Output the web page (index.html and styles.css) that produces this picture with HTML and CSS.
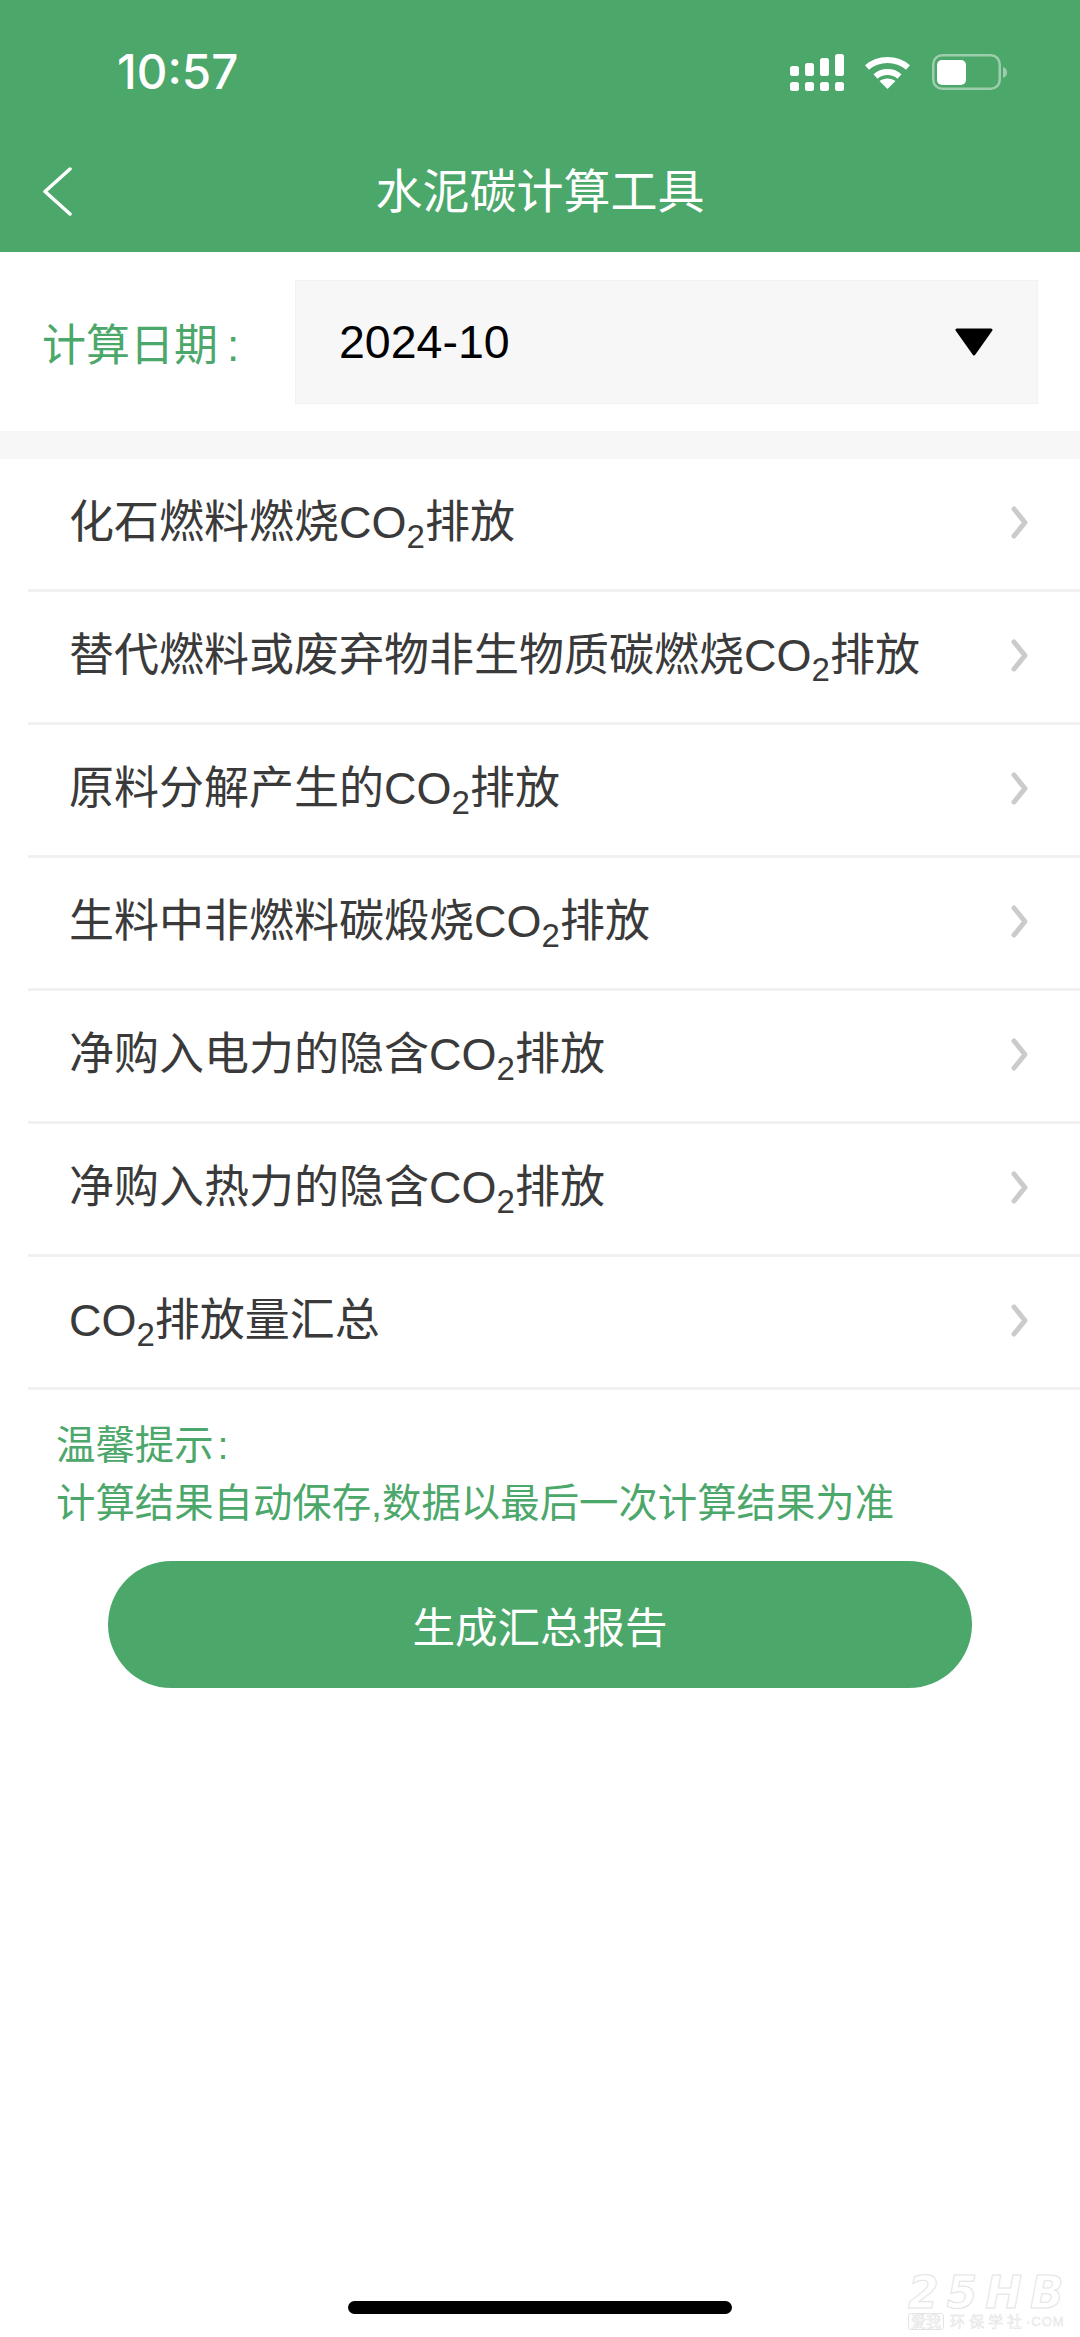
FILE: index.html
```html
<!DOCTYPE html>
<html lang="zh-CN">
<head>
<meta charset="utf-8">
<title>水泥碳计算工具</title>
<link rel="stylesheet" href="styles.css">
</head>
<body>
<div class="page">
  <header class="header">
    <div class="status">
      <span class="time">10:57</span>
      <div class="status-icons">
        <svg class="signal" width="54" height="37" viewBox="0 0 54 37">
          <rect x="0" y="12" width="9" height="10" rx="2.5"/><rect x="15" y="9" width="9" height="13" rx="2.5"/><rect x="30" y="4" width="9" height="18" rx="2.5"/><rect x="45" y="0" width="9" height="22" rx="2.5"/>
          <rect x="0" y="28" width="9" height="9" rx="2.5"/><rect x="15" y="28" width="9" height="9" rx="2.5"/><rect x="30" y="28" width="9" height="9" rx="2.5"/><rect x="45" y="28" width="9" height="9" rx="2.5"/>
        </svg>
        <svg class="wifi" width="47" height="33" viewBox="0 0 47 33">
          <path d="M3 11.5C14.5 1.5 32.5 1.5 44 11.5" fill="none" stroke="#fff" stroke-width="6"/>
          <path d="M11.5 20.5C18 14.5 29 14.5 35.5 20.5" fill="none" stroke="#fff" stroke-width="6"/>
          <path d="M15.5 25C20 21.5 27 21.5 31.5 25L23.5 33Z" fill="#fff"/>
        </svg>
        <svg class="battery" width="75" height="36" viewBox="0 0 75 36">
          <rect x="1.25" y="1.25" width="66.5" height="33.5" rx="9" fill="none" stroke="#fff" stroke-opacity=".45" stroke-width="2.5"/>
          <rect x="5" y="6" width="29" height="25" rx="5" fill="#fff"/>
          <path d="M71 13C74 14 75 16 75 18.500C75 21 74 23 71 24Z" fill="#fff" fill-opacity=".45"/>
        </svg>
      </div>
    </div>
    <div class="nav">
      <svg class="back" width="29" height="49" viewBox="0 0 29 49"><path d="M27 2L2 24.500L27 47" fill="none" stroke="#fff" stroke-width="3.500" stroke-linecap="round" stroke-linejoin="round"/></svg>
      <h1 class="title">水泥碳计算工具</h1>
    </div>
  </header>

  <section class="date-bar">
    <span class="date-label">计算日期<span class="colon">:</span></span>
    <div class="select">
      <span class="select-value">2024-10</span>
      <svg class="caret" width="40" height="28" viewBox="0 0 40 28"><path d="M3 2H37L20 26Z" fill="#000" stroke="#000" stroke-width="3" stroke-linejoin="round"/></svg>
    </div>
  </section>

  <div class="band"></div>

  <ul class="list">
    <li class="row"><span class="row-text">化石燃料燃烧CO<sub>2</sub>排放</span><svg class="arrow" width="18" height="33" viewBox="0 0 18 33"><path d="M3 3L14 16.500L3 30" fill="none" stroke="#cbcbcb" stroke-width="5" stroke-linecap="round" stroke-linejoin="round"/></svg></li>
    <li class="row"><span class="row-text">替代燃料或废弃物非生物质碳燃烧CO<sub>2</sub>排放</span><svg class="arrow" width="18" height="33" viewBox="0 0 18 33"><path d="M3 3L14 16.500L3 30" fill="none" stroke="#cbcbcb" stroke-width="5" stroke-linecap="round" stroke-linejoin="round"/></svg></li>
    <li class="row"><span class="row-text">原料分解产生的CO<sub>2</sub>排放</span><svg class="arrow" width="18" height="33" viewBox="0 0 18 33"><path d="M3 3L14 16.500L3 30" fill="none" stroke="#cbcbcb" stroke-width="5" stroke-linecap="round" stroke-linejoin="round"/></svg></li>
    <li class="row"><span class="row-text">生料中非燃料碳煅烧CO<sub>2</sub>排放</span><svg class="arrow" width="18" height="33" viewBox="0 0 18 33"><path d="M3 3L14 16.500L3 30" fill="none" stroke="#cbcbcb" stroke-width="5" stroke-linecap="round" stroke-linejoin="round"/></svg></li>
    <li class="row"><span class="row-text">净购入电力的隐含CO<sub>2</sub>排放</span><svg class="arrow" width="18" height="33" viewBox="0 0 18 33"><path d="M3 3L14 16.500L3 30" fill="none" stroke="#cbcbcb" stroke-width="5" stroke-linecap="round" stroke-linejoin="round"/></svg></li>
    <li class="row"><span class="row-text">净购入热力的隐含CO<sub>2</sub>排放</span><svg class="arrow" width="18" height="33" viewBox="0 0 18 33"><path d="M3 3L14 16.500L3 30" fill="none" stroke="#cbcbcb" stroke-width="5" stroke-linecap="round" stroke-linejoin="round"/></svg></li>
    <li class="row"><span class="row-text">CO<sub>2</sub>排放量汇总</span><svg class="arrow" width="18" height="33" viewBox="0 0 18 33"><path d="M3 3L14 16.500L3 30" fill="none" stroke="#cbcbcb" stroke-width="5" stroke-linecap="round" stroke-linejoin="round"/></svg></li>
  </ul>

  <div class="tip">
    <p>温馨提示<span class="tip-colon">:</span></p>
    <p>计算结果自动保存,数据以最后一次计算结果为准</p>
  </div>

  <div class="action"><button class="report-btn" type="button">生成汇总报告</button></div>

  <div class="home-indicator"></div>

  <div class="watermark">
    <div class="wm-main">25HB</div>
    <div class="wm-sub"><span class="wm-box">爱我</span><span class="wm-cn">环保学社</span><span class="wm-dom">·COM</span></div>
  </div>
</div>
</body>
</html>
```

FILE: styles.css
```css
* { box-sizing: border-box; }
html, body { margin: 0; padding: 0; }
body {
  font-family: "Liberation Sans", "Noto Sans CJK SC", sans-serif;
  background: #fff;
}
.page {
  position: relative;
  width: 1080px;
  height: 2337px;
  overflow: hidden;
  display: flex;
  flex-direction: column;
  background: #fff;
}

/* header */
.header { background: #4ca76a; height: 252px; color: #fff; flex: none; }
.status {
  height: 140px;
  display: flex;
  align-items: center;
  justify-content: space-between;
  padding: 4px 73px 0 117px;
}
.time { font-family: Inter, "Liberation Sans", sans-serif; font-size: 47.5px; font-weight: 500; line-height: 1; }
.status-icons { display: flex; align-items: center; }
.signal { fill: #fff; margin-right: 20px; }
.wifi { margin-right: 21px; }
.nav {
  height: 112px;
  display: flex;
  align-items: center;
  justify-content: center;
  position: relative;
  padding-bottom: 8px;
}
.back { position: absolute; left: 43px; top: 27px; }
.title { margin: 0; font-size: 47px; font-weight: 400; line-height: 1.2; }

/* date */
.date-bar {
  height: 179px;
  flex: none;
  display: flex;
  align-items: center;
  padding: 0 42px;
  justify-content: space-between;
}
.date-label { color: #4ca76a; font-size: 44px; font-weight: 400; }
.colon { margin-left: 9px; }
.select {
  width: 743px;
  height: 124px;
  background: #f7f7f7;
  border: 1px solid #f2f2f2;
  display: flex;
  align-items: center;
  justify-content: space-between;
  padding: 0 43px;
}
.select-value { font-size: 46.5px; color: #000; }
.band { height: 28px; background: #f7f7f7; flex: none; }

/* list */
.list { list-style: none; margin: 0 0 0 28px; padding: 0; flex: none; }
.row {
  height: 133px;
  border-bottom: 3px solid #f1f1f1;
  display: flex;
  align-items: center;
  justify-content: space-between;
  padding: 0 51px 0 41px;
}
.row-text { font-size: 45px; font-weight: 400; color: #3a3a3a; line-height: 1.2; white-space: nowrap; margin-bottom: 2px; }
.row-text sub { font-size: 33px; line-height: 0; vertical-align: -10px; }
.arrow { margin-bottom: 3px; }

/* tip */
.tip { padding: 26px 56px 0; color: #4ca76a; font-size: 39.4px; font-weight: 400; flex: none; }
.tip p { margin: 0; line-height: 58px; }
.tip-colon { margin-left: 4px; }

.action { padding: 29px 108px 0; flex: none; }
.report-btn {
  display: block;
  width: 100%;
  height: 127px;
  border: 0;
  border-radius: 64px;
  background: #4ca76a;
  color: #fff;
  font: 400 42.5px "Liberation Sans", "Noto Sans CJK SC", sans-serif;
}

.home-indicator {
  width: 384px;
  height: 13px;
  border-radius: 7px;
  background: #000;
  margin: auto auto 23px;
  flex: none;
}

/* watermark */
.watermark {
  position: absolute;
  right: 6px;
  bottom: 7px;
  width: 166px;
  color: #fff;
}
.wm-main {
  font-family: "DejaVu Sans", sans-serif;
  font-style: italic;
  font-weight: 700;
  font-size: 44px;
  letter-spacing: 8px;
  line-height: 36px;
  white-space: nowrap;
  -webkit-text-stroke: 1px #e4e4e4;
}
.wm-sub {
  display: flex;
  align-items: center;
  font-size: 15px;
  line-height: 15px;
  margin-top: 2px;
  white-space: nowrap;
  -webkit-text-stroke: .5px #e0e0e0;
}
.wm-box { border: 1px solid #e4e4e4; border-radius: 3px; padding: 0 2px; margin-right: 6px; }
.wm-cn { letter-spacing: 4px; }
.wm-dom { font-size: 13px; letter-spacing: 1px; }
```
